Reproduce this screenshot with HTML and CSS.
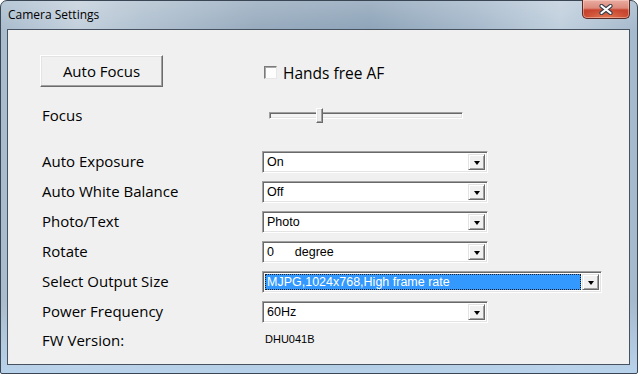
FILE: index.html
```html
<!DOCTYPE html>
<html>
<head>
<meta charset="utf-8">
<link rel="stylesheet" href="styles.css">
</head>
<body>
<div class="window">
  <div class="titlebar">
    <span class="title">Camera Settings</span>
    <div class="close">
      <svg width="14" height="11" viewBox="0 0 14 11">
        <path d="M2.5 2 L11.5 9 M11.5 2 L2.5 9" stroke="#3a3f4a" stroke-width="4.2" stroke-linecap="round" fill="none"/>
        <path d="M2.5 2 L11.5 9 M11.5 2 L2.5 9" stroke="#ffffff" stroke-width="2.2" stroke-linecap="round" fill="none"/>
      </svg>
    </div>
  </div>
  <div class="client">
    <div class="row row-top">
      <div class="cell-left"><div class="button">Auto Focus</div></div>
      <div class="cell-right check-row"><span class="checkbox"></span><span class="check-label">Hands free AF</span></div>
    </div>
    <div class="row row-focus">
      <div class="cell-left label">Focus</div>
      <div class="cell-right"><div class="slider"><div class="track"></div><div class="thumb"></div></div></div>
    </div>
    <div class="row row-combo">
      <div class="cell-left label">Auto Exposure</div>
      <div class="cell-right"><div class="combo"><span class="value">On</span><span class="arrow"><span class="tri"></span></span></div></div>
    </div>
    <div class="row row-combo">
      <div class="cell-left label">Auto White Balance</div>
      <div class="cell-right"><div class="combo"><span class="value">Off</span><span class="arrow"><span class="tri"></span></span></div></div>
    </div>
    <div class="row row-combo">
      <div class="cell-left label">Photo/Text</div>
      <div class="cell-right"><div class="combo"><span class="value">Photo</span><span class="arrow"><span class="tri"></span></span></div></div>
    </div>
    <div class="row row-combo">
      <div class="cell-left label">Rotate</div>
      <div class="cell-right"><div class="combo"><span class="value pre">0      degree</span><span class="arrow"><span class="tri"></span></span></div></div>
    </div>
    <div class="row row-combo">
      <div class="cell-left label">Select Output Size</div>
      <div class="cell-right"><div class="combo wide"><span class="value selected">MJPG,1024x768,High frame rate</span><span class="arrow"><span class="tri"></span></span></div></div>
    </div>
    <div class="row row-combo">
      <div class="cell-left label">Power Frequency</div>
      <div class="cell-right"><div class="combo"><span class="value">60Hz</span><span class="arrow"><span class="tri"></span></span></div></div>
    </div>
    <div class="row row-fw">
      <div class="cell-left label">FW Version:</div>
      <div class="cell-right fw">DHU041B</div>
    </div>
  </div>
</div>
</body>
</html>
```

FILE: styles.css
```css
html, body {
  margin: 0;
  padding: 0;
  background: #ffffff;
}

.window {
  width: 638px;
  height: 374px;
  box-sizing: border-box;
  border: 1px solid #3b4654;
  border-radius: 7px 7px 2px 2px;
  padding: 0 7px 8px 6px;
  display: flex;
  flex-direction: column;
  background:
    linear-gradient(180deg, rgba(255,255,255,0.18) 0%, rgba(255,255,255,0) 30px, rgba(185,209,234,0) 300px, rgba(185,211,236,1) 374px),
    linear-gradient(90deg, #a9bccd 0%, #c3d0dc 12%, #b1c1d0 22%, #97abbe 40%, #8ea4b9 58%, #a6b9cb 75%, #c0cfdd 88%, #a5b9cc 100%);
  font-family: "Open Sans", "Noto Sans", sans-serif;
}

.titlebar {
  height: 28px;
  display: flex;
  align-items: flex-start;
  flex-shrink: 0;
}

.title {
  font-size: 12px;
  color: #000;
  padding-left: 1px;
  padding-top: 6px;
  line-height: 16px;
}

.close {
  margin-left: auto;
  margin-top: -1px;
  width: 48px;
  height: 19px;
  box-sizing: border-box;
  border: 1px solid #5a2a24;
  border-top: none;
  border-radius: 0 0 5px 5px;
  background:
    radial-gradient(ellipse 60% 50% at 50% 100%, rgba(255,170,120,0.55), rgba(255,170,120,0) 100%),
    linear-gradient(180deg, #e9aca1 0%, #dc8a7b 45%, #c8452f 55%, #c23c26 100%);
  box-shadow: inset 0 0 0 1px rgba(255,220,210,0.45);
  display: flex;
  align-items: center;
  justify-content: center;
}

.close svg {
  display: block;
  margin-top: 1px;
}

.client {
  flex: 1;
  background: #f0f0f0;
  border: 1px solid #46525f;
  padding: 25px 0 0 32px;
  display: flex;
  flex-direction: column;
  font-size: 15px;
  color: #000;
}

.row {
  display: flex;
  align-items: center;
}

.cell-left {
  width: 222px;
  flex-shrink: 0;
}

.label {
  padding-left: 2px;
  padding-bottom: 3px;
  box-sizing: border-box;
  line-height: 18px;
}

.row-top {
  height: 32px;
}

.button {
  width: 123px;
  height: 32px;
  box-sizing: border-box;
  border: 1px solid;
  border-color: #ffffff #6b6b6b #6b6b6b #ffffff;
  box-shadow: inset -1px -1px 0 #a0a0a0, inset 1px 1px 0 #e3e3e3;
  background: #f0f0f0;
  display: flex;
  align-items: center;
  justify-content: center;
  font-size: 15px;
}

.check-row {
  display: flex;
  align-items: center;
  padding-left: 2px;
  padding-top: 3px;
}

.checkbox {
  width: 13px;
  height: 13px;
  box-sizing: border-box;
  border: 1px solid;
  border-color: #7a7a7a #e6e6e6 #e6e6e6 #7a7a7a;
  box-shadow: inset 1px 1px 0 #a8a8a8;
  background: #fdfdfd;
}

.check-label {
  margin-left: 6px;
  font-size: 15.5px;
}

.row-focus {
  height: 26px;
  margin-top: 16px;
}

.slider {
  position: relative;
  width: 194px;
  height: 16px;
  margin-left: 7px;
}

.track {
  position: absolute;
  left: 0;
  right: 0;
  top: 4px;
  height: 7px;
  box-sizing: border-box;
  border: 1px solid;
  border-color: #a0a0a0 #ffffff #ffffff #a0a0a0;
  box-shadow: inset 1px 1px 0 #696969, inset -1px -1px 0 #e3e3e3;
  background: #f4f4f4;
}

.thumb {
  position: absolute;
  left: 47px;
  top: 0;
  width: 7px;
  height: 15px;
  box-sizing: border-box;
  border: 1px solid;
  border-color: #ffffff #696969 #696969 #ffffff;
  box-shadow: inset -1px -1px 0 #a0a0a0, inset 1px 1px 0 #e3e3e3;
  background: #ececec;
}

.row-combo {
  height: 22px;
  margin-top: 8px;
}

.row-focus + .row-combo {
  margin-top: 22px;
}

.combo {
  width: 226px;
  height: 22px;
  box-sizing: border-box;
  border: 1px solid;
  border-color: #a0a0a0 #ffffff #ffffff #a0a0a0;
  box-shadow: inset 1px 1px 0 #696969, inset -1px -1px 0 #e3e3e3;
  background: #ffffff;
  display: flex;
  padding: 2px 2px 2px 2px;
  font-family: "Liberation Sans", Arial, sans-serif;
  font-size: 12.5px;
}

.combo.wide {
  width: 340px;
}

.value {
  flex: 1;
  display: flex;
  align-items: center;
  padding-left: 2px;
  margin-right: 1px;
  color: #000;
}

.value.pre {
  white-space: pre;
}

.value.selected {
  background: #3399ff;
  color: #ffffff;
  outline: 1px dotted #1a1a1a;
  outline-offset: -1px;
}

.arrow {
  width: 17px;
  flex-shrink: 0;
  box-sizing: border-box;
  border: 1px solid;
  border-color: #e3e3e3 #696969 #696969 #e3e3e3;
  box-shadow: inset 1px 1px 0 #ffffff, inset -1px -1px 0 #a0a0a0;
  background: #f0f0f0;
  display: flex;
  align-items: center;
  justify-content: center;
}

.tri {
  width: 0;
  height: 0;
  border-left: 3.5px solid transparent;
  border-right: 3.5px solid transparent;
  border-top: 4px solid #000;
  margin-top: 1px;
}

.row-fw {
  height: 20px;
  margin-top: 8px;
}

.fw {
  font-family: "Liberation Sans", Arial, sans-serif;
  font-size: 11px;
  padding-left: 3px;
  margin-top: -4px;
}
```
